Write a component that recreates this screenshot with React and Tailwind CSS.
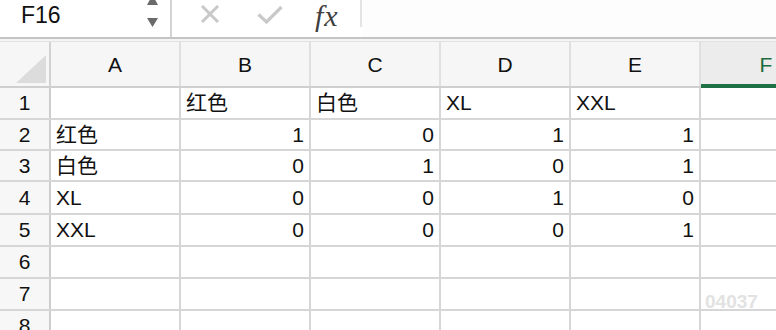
import React from "react";

const FONT = { fontFamily: '"Liberation Sans", "Noto Sans CJK SC", sans-serif' };

const cols = ["A", "B", "C", "D", "E", "F"];
const rowHeights = ["h-[32px]", "h-[31px]", "h-[31px]", "h-[33px]", "h-[32px]", "h-[32px]", "h-[32px]", "h-[32px]"];
const data = [
  ["", "红色", "白色", "XL", "XXL", ""],
  ["红色", 1, 0, 1, 1, ""],
  ["白色", 0, 1, 0, 1, ""],
  ["XL", 0, 0, 1, 0, ""],
  ["XXL", 0, 0, 0, 1, ""],
  ["", "", "", "", "", ""],
  ["", "", "", "", "", ""],
  ["", "", "", "", "", ""],
];

function TopBar() {
  return (
    <div className="flex h-[37px] bg-white">
      <div className="relative flex w-[170px] shrink-0 items-center pb-[6px] pl-[21px] text-[23px] text-[#111]">
        F16
        <svg className="absolute left-[146px] top-0" width="13" height="28" viewBox="0 0 13 28">
          <polygon points="1,5 12,5 6.5,-5" fill="#6a6a6a" />
          <polygon points="1,18 12,18 6.5,27" fill="#6a6a6a" />
        </svg>
      </div>
      <div className="w-[2px] shrink-0 bg-[#d3d3d3]" />
      <div className="flex w-[188px] shrink-0 items-start pt-[5px]">
        <svg className="ml-[28px]" width="20" height="18" viewBox="0 0 20 18">
          <path d="M2 1 L18 17 M18 1 L2 17" stroke="#c9c9c9" strokeWidth="3" fill="none" />
        </svg>
        <svg className="ml-[37px]" width="26" height="19" viewBox="0 0 26 19">
          <path d="M1.5 9.5 L9.5 17 L24.5 2" stroke="#c9c9c9" strokeWidth="3.2" fill="none" />
        </svg>
        <span
          className="ml-[32px] mt-[-9px] text-[30px] italic leading-[40px] tracking-[1px] text-[#3f3f3f]"
          style={{ fontFamily: '"Liberation Serif", "DejaVu Serif", serif' }}
        >
          fx
        </span>
      </div>
      <div className="h-[27px] w-[2px] shrink-0 bg-[#e4e4e4]" />
      <div className="flex-1 bg-[#fdfdfd]" />
    </div>
  );
}

function HeaderRow() {
  return (
    <div className="flex h-[46px] border-b-2 border-[#cfcfcf] bg-[#f6f6f6]">
      <div className="relative w-[51px] shrink-0 border-r-2 border-[#d2d2d2]">
        <svg className="absolute left-[16px] top-[13px]" width="30" height="28" viewBox="0 0 30 28">
          <polygon points="30,0 30,28 0,28" fill="#dcdcdc" />
        </svg>
      </div>
      {cols.map((c) => {
        const sel = c === "F";
        return (
          <div
            key={c}
            className={
              sel
                ? "relative flex w-[130px] shrink-0 items-center justify-center bg-[#ececec] pt-[2px] text-[21px] text-[#1d6b3e]"
                : "flex w-[130px] shrink-0 items-center justify-center border-r-2 border-[#e0e0e0] pt-[2px] text-[21px] text-[#111]"
            }
          >
            {c}
            {sel && <div className="absolute bottom-[-2px] left-0 right-0 h-[4px] bg-[#1e7145]" />}
          </div>
        );
      })}
    </div>
  );
}

function Row({ idx, cells }) {
  return (
    <div className={`flex ${rowHeights[idx]} border-b-2 border-[#d6d6d6]`}>
      <div className="flex w-[51px] shrink-0 items-center justify-center border-r-2 border-[#cdcdcd] bg-[#f7f7f7] text-[21px] text-[#111]">
        {idx + 1}
      </div>
      {cells.map((v, i) => {
        const num = typeof v === "number";
        return (
          <div
            key={i}
            className={
              num
                ? "flex w-[130px] shrink-0 items-center justify-end border-r-2 border-[#d6d6d6] pr-[5px] text-[21px] text-[#111]"
                : "flex w-[130px] shrink-0 items-center justify-start border-r-2 border-[#d6d6d6] pl-[5px] text-[21px] text-[#111]"
            }
          >
            {v}
          </div>
        );
      })}
    </div>
  );
}

export default function App() {
  return (
    <div className="relative h-[330px] w-[776px] overflow-hidden bg-white" style={FONT}>
      <TopBar />
      <div className="h-[2px] bg-[#c4c4c4]" />
      <div className="h-[3px] border-b border-[#e2e2e2] bg-[#f4f4f4]" />
      <HeaderRow />
      {data.map((cells, i) => (
        <Row key={i} idx={i} cells={cells} />
      ))}
      <div className="absolute left-[705px] top-[292px] text-[19px] font-bold leading-none text-[#e2e2e2]">
        04037
      </div>
    </div>
  );
}
